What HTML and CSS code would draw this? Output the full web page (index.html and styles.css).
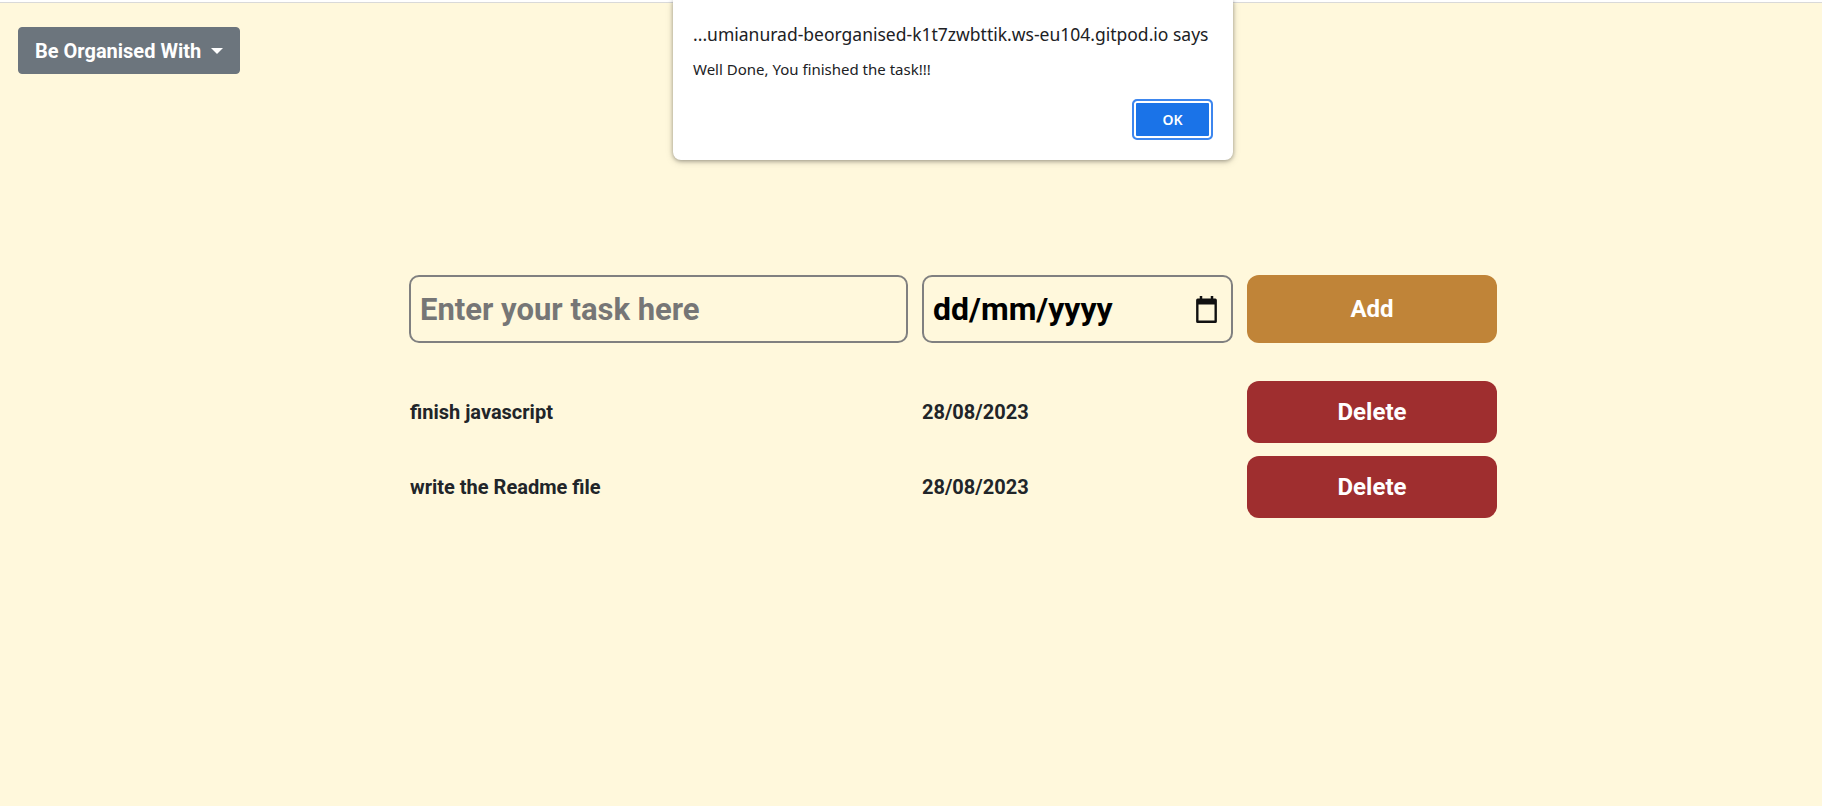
FILE: index.html
```html
<!DOCTYPE html>
<html lang="en">
<head>
<meta charset="utf-8">
<title>Be Organised</title>
<link rel="stylesheet" href="styles.css">
</head>
<body>
<div class="chrome-line"></div>
<header class="header">
  <button class="dropdown-btn">Be Organised With<span class="caret"></span></button>
</header>
<main class="todo">
  <div class="grid">
    <div class="field task-field"><input class="task-input" type="text" placeholder="Enter your task here"></div>
    <div class="field date-field">
      <span class="date-text">dd/mm/yyyy</span>
      <svg class="cal-icon" width="21" height="27" viewBox="0 0 20 26" aria-hidden="true">
        <rect x="3.5" y="0" width="2.4" height="3.5" fill="#111"/>
        <rect x="14.1" y="0" width="2.4" height="3.5" fill="#111"/>
        <path fill="#111" fill-rule="evenodd" d="M1.5 2.5h17a1.5 1.5 0 0 1 1.5 1.5v20.5a1.5 1.5 0 0 1-1.5 1.5h-17A1.5 1.5 0 0 1 0 24.5V4a1.5 1.5 0 0 1 1.5-1.5zM2.3 8.2v15.5h15.4V8.2z"/>
      </svg>
    </div>
    <button class="btn add-btn">Add</button>

    <div class="task-name first">finish javascript</div>
    <div class="task-date first">28/08/2023</div>
    <button class="btn delete-btn first">Delete</button>

    <div class="task-name">write the Readme file</div>
    <div class="task-date">28/08/2023</div>
    <button class="btn delete-btn">Delete</button>
  </div>
</main>

<div class="alert">
  <div class="alert-title">...umianurad-beorganised-k1t7zwbttik.ws-eu104.gitpod.io says</div>
  <div class="alert-msg">Well Done, You finished the task!!!</div>
  <div class="alert-actions"><button class="ok-btn">OK</button></div>
</div>
</body>
</html>
```

FILE: styles.css
```css
* { box-sizing: border-box; }
html, body { height: 100%; }
body {
  margin: 0;
  background: #fff8dc;
  font-family: Roboto, "Liberation Sans", sans-serif;
  color: #212529;
}
.chrome-line {
  height: 3px;
  background: #fff;
  border-bottom: 1px solid #d9d9d9;
  border-top: 1px solid #fff;
}
.header {
  padding: 24px 18px 0;
}
.dropdown-btn {
  display: inline-flex;
  align-items: center;
  height: 47px;
  padding: 0 16px;
  white-space: nowrap;
  background: #6c757d;
  color: #fff;
  border: 1px solid #6c757d;
  border-radius: 4px;
  font-family: Roboto, sans-serif;
  font-weight: 700;
  font-size: 20px;
}
.caret {
  display: inline-block;
  margin-left: 10px;
  border-top: 6px solid #fff;
  border-left: 6px solid transparent;
  border-right: 6px solid transparent;
}
.todo {
  padding-left: 409px;
  padding-top: 201px;
}
.grid {
  display: grid;
  grid-template-columns: 499px 311px 250px;
  column-gap: 14px;
  row-gap: 13px;
  align-items: center;
}
.field {
  height: 68px;
  border: 2px solid #808080;
  border-radius: 10px;
  display: flex;
  align-items: center;
}
.task-input {
  width: 100%;
  height: 100%;
  border: none;
  background: transparent;
  padding: 0 9px;
  font-family: Roboto, sans-serif;
  font-weight: 700;
  font-size: 31px;
  color: #212529;
  outline: none;
}
.task-input::placeholder { color: #767676; opacity: 1; }
.date-field {
  padding: 0 10px 0 9px;
  justify-content: space-between;
}
.date-text {
  font-weight: 700;
  font-size: 32px;
  color: #000;
}
.cal-icon { margin-right: 4px; }
.btn {
  border: none;
  color: #fff;
  font-family: Roboto, sans-serif;
  font-weight: 700;
  cursor: pointer;
}
.add-btn {
  height: 68px;
  background: #c08438;
  border-radius: 12px;
  font-size: 24px;
}
.delete-btn {
  height: 62px;
  background: #9f2e2f;
  border-radius: 12px;
  font-size: 24px;
}
.first { margin-top: 25px; }
.task-name, .task-date {
  font-weight: 700;
  font-size: 20px;
  color: #212529;
}
.task-name { padding-left: 1px; }

.alert {
  position: absolute;
  top: 0;
  left: 673px;
  width: 560px;
  height: 160px;
  background: #fff;
  border-radius: 0 0 8px 8px;
  box-shadow: 0 1px 4px rgba(0,0,0,0.35), 0 2px 8px rgba(0,0,0,0.12);
  padding: 23px 20px 0 20px;
  font-family: "Noto Sans", "Open Sans", sans-serif;
  color: #202124;
}
.alert-title {
  font-size: 17.5px;
  line-height: 22px;
  white-space: nowrap;
}
.alert-msg {
  margin-top: 14px;
  font-size: 15px;
  line-height: 20px;
}
.alert-actions {
  display: flex;
  justify-content: flex-end;
  margin-top: 20px;
}
.ok-btn {
  width: 81px;
  height: 41px;
  background: #1a73e8;
  color: #fff;
  border: 2px solid #3d86ee;
  box-shadow: inset 0 0 0 2px #fff;
  border-radius: 5px;
  font-family: "Noto Sans", "Open Sans", sans-serif;
  font-weight: 600;
  font-size: 14px;
  margin-right: 0;
}
```
